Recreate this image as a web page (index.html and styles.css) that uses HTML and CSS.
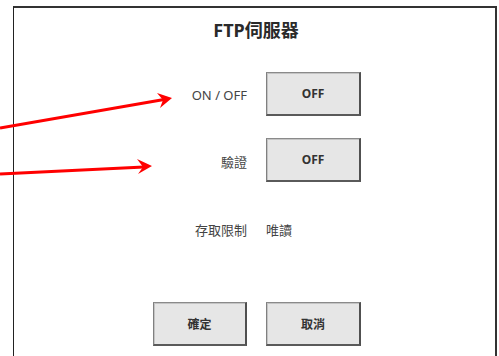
FILE: index.html
```html
<!DOCTYPE html>
<html lang="zh-Hant">
<head>
<meta charset="utf-8">
<title>FTP伺服器</title>
<link rel="stylesheet" href="styles.css">
</head>
<body>
<div class="panel">
  <h1 class="title">FTP伺服器</h1>
  <div class="row row-1">
    <span class="label">ON / OFF</span>
    <button class="btn">OFF</button>
  </div>
  <div class="row row-2">
    <span class="label">驗證</span>
    <button class="btn">OFF</button>
  </div>
  <div class="row row-3">
    <span class="label">存取限制</span>
    <span class="value">唯讀</span>
  </div>
  <div class="row row-4">
    <div class="cell-right"><button class="btn btn-action">確定</button></div>
    <button class="btn">取消</button>
  </div>
</div>
<svg class="annot" width="499" height="356" viewBox="0 0 499 356">
  <line x1="0" y1="128" x2="164" y2="99.5" stroke="#ff0000" stroke-width="3"/>
  <polygon points="172,98 157,93 163,100 160,108" fill="#ff0000"/>
  <line x1="0" y1="174" x2="144" y2="167" stroke="#ff0000" stroke-width="3"/>
  <polygon points="152,166 137,159 143,167 138,174" fill="#ff0000"/>
</svg>
</body>
</html>
```
FILE: styles.css
```css
html, body {
  margin: 0;
  padding: 0;
  background: #ffffff;
}
body {
  position: relative;
  width: 499px;
  height: 356px;
  overflow: hidden;
  font-family: "Noto Sans", "Noto Sans CJK TC", sans-serif;
  color: #444;
}
.panel {
  margin: 6px 0 0 13px;
  width: 481px;
  height: 338px;
  border-top: 2px solid #333;
  border-left: 1px solid #222;
  border-right: 2px solid #333;
  box-sizing: content-box;
  padding-top: 10px;
}
.title {
  margin: 0;
  height: 24px;
  line-height: 24px;
  font-size: 18px;
  font-weight: 700;
  color: #2a2a2a;
  text-align: center;
  font-family: "Noto Sans", "Noto Sans CJK TC", sans-serif;
  padding-left: 3px;
}
.row {
  display: grid;
  grid-template-columns: 233px 95px;
  column-gap: 19px;
  align-items: center;
  height: 44px;
}
.row-1 { margin-top: 30px; }
.row-2 { margin-top: 22px; }
.row-3 { margin-top: 24px; }
.row-4 { margin-top: 52px; }
.label {
  text-align: right;
  font-size: 13px;
  color: #444;
  padding-top: 2px;
}
.value {
  font-size: 13px;
  color: #444;
  padding-top: 2px;
}
.cell-right {
  display: flex;
  justify-content: flex-end;
}
.btn {
  width: 95px;
  height: 44px;
  margin: 0;
  padding: 0;
  background: #e6e6e6;
  border-style: solid;
  border-width: 1px 2px 2px 1px;
  border-color: #8a8a8a #505050 #5a5a5a #808080;
  box-shadow: inset 1px 1px 0 #c4c4c4;
  font-family: "Noto Sans", "Noto Sans CJK TC", sans-serif;
  font-size: 12px;
  font-weight: 700;
  color: #333;
}
.btn-action {
  width: 94px;
}
.annot {
  position: absolute;
  left: 0;
  top: 0;
  pointer-events: none;
}
```
